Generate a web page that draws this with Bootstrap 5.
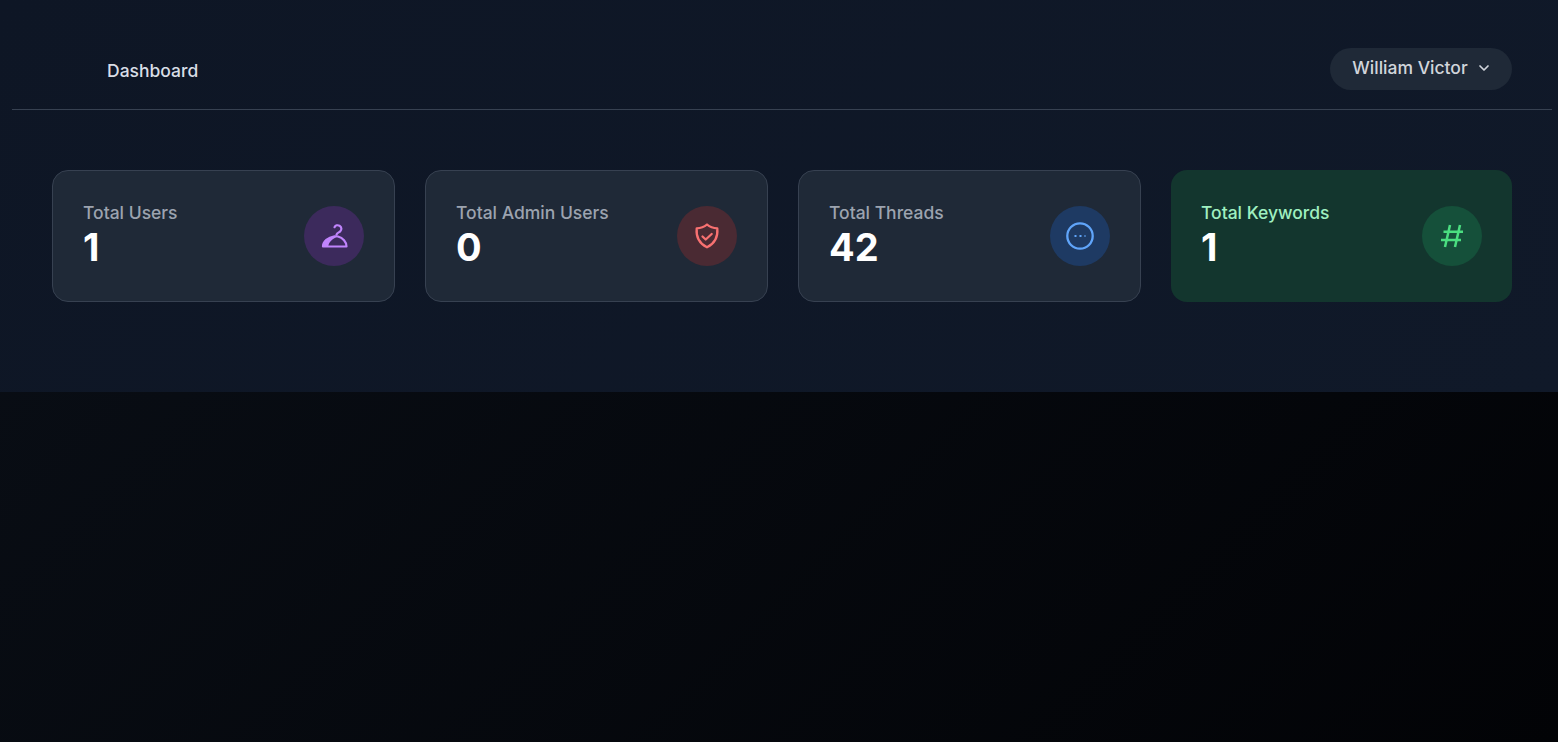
<!DOCTYPE html>
<html lang="en">
<head>
<meta charset="utf-8">
<title>Dashboard</title>
<link href="https://cdn.jsdelivr.net/npm/bootstrap@5.3.0/dist/css/bootstrap.min.css" rel="stylesheet">
<style>
html,body{height:100%}
body{font-family:Inter,"Liberation Sans",sans-serif;background:linear-gradient(135deg,#0a0f17 0%,#020306 100%);min-height:742px;overflow:hidden}
.upper-area{height:392px;background:linear-gradient(135deg,#0e1625 0%,#101929 100%)}
.top-strip{height:110px;margin:0 6px 0 12px;padding:48px 40px 0 95px;border-bottom:1px solid #374151}
.page-title{color:#d9dee6;font-size:17.5px;font-weight:500;line-height:24px;margin-top:11px}
.user-pill{height:42px;width:182px;border:0;border-radius:21px;background:#1f2937;color:#d1d5db;font-size:17.5px;font-weight:500;gap:10px;padding:0 0 2px}
.stat-row{padding:60px 46px 0 52px;gap:30px}
.stat-box{flex:1 1 0;height:132px;border-radius:16px;background:#1f2937;border:1px solid #374151;padding:0 30px}
.stat-box.is-green{background:#13362e;border:0}
.stat-label{color:#9ca3af;font-size:17.5px;font-weight:500;line-height:24px}
.is-green .stat-label{color:#9ff0c0}
.stat-num{color:#fff;font-size:38px;font-weight:700;line-height:46px;margin-top:-1px}
.stat-text{margin-top:-1px}
.icon-disc{width:60px;height:60px;border-radius:50%;flex:none}
.disc-purple{background:#3c2a5c;color:#c084fc}
.disc-red{background:#4a2a33;color:#f87171}
.disc-blue{background:#1e3a63;color:#60a5fa}
.disc-green{background:#15503a;color:#4ade80}
</style>
</head>
<body>
<div class="upper-area">
  <div class="top-strip d-flex justify-content-between align-items-start">
    <div class="page-title">Dashboard</div>
    <button type="button" class="user-pill d-flex align-items-center justify-content-center">William Victor
      <svg width="12" height="12" viewBox="0 0 12 12" fill="none" stroke="currentColor" stroke-width="1.7" stroke-linecap="round" stroke-linejoin="round"><path d="M2 4l4 4 4-4"/></svg>
    </button>
  </div>
  <div class="stat-row d-flex">
    <div class="stat-box d-flex align-items-center justify-content-between">
      <div class="stat-text"><div class="stat-label">Total Users</div><div class="stat-num">1</div></div>
      <div class="icon-disc disc-purple d-flex align-items-center justify-content-center">
        <svg width="32" height="32" viewBox="0 0 32 32"><g fill="none" stroke="currentColor" stroke-width="2.200" stroke-linecap="round" stroke-linejoin="round"><path d="M16.500 7.200c1-1.900 3.200-2.400 5-1.500 2.200 1.200 2.500 4 .7 5.700-1.300 1.200-3 1.400-3.700 3.300"/><path d="M5 26.500h23.500c0-4.600-3.700-8.800-8.500-10-1-.2-2.500-.3-3.500-.2C10 17.400 5 21.500 5 26.500z"/></g><path fill="currentColor" d="M5 26.500c0-5 5-9.200 11.500-10.200 1.200-.2 2.400-.1 3.500.2-5.300 2-9 5-9.800 10z"/></svg>
      </div>
    </div>
    <div class="stat-box d-flex align-items-center justify-content-between">
      <div class="stat-text"><div class="stat-label">Total Admin Users</div><div class="stat-num">0</div></div>
      <div class="icon-disc disc-red d-flex align-items-center justify-content-center">
        <svg width="32" height="32" viewBox="0 0 32 32" fill="none" stroke="currentColor" stroke-width="2.300" stroke-linecap="round" stroke-linejoin="round"><path d="M16 4.500c2.800 2.400 6.200 3.700 10.300 3.900.8 8.400-2.500 15-10.300 18.900C8.200 23.400 4.900 16.800 5.700 8.400 9.800 8.200 13.200 6.900 16 4.500z"/><path d="M11.500 16.500l3.200 3 6-5.500"/></svg>
      </div>
    </div>
    <div class="stat-box d-flex align-items-center justify-content-between">
      <div class="stat-text"><div class="stat-label">Total Threads</div><div class="stat-num">42</div></div>
      <div class="icon-disc disc-blue d-flex align-items-center justify-content-center">
        <svg width="32" height="32" viewBox="0 0 32 32" fill="none" stroke="currentColor" stroke-width="2.300"><circle cx="16" cy="16" r="12.700"/><path stroke-width="2" stroke-dasharray="2 3" d="M10.500 16h11"/></svg>
      </div>
    </div>
    <div class="stat-box is-green d-flex align-items-center justify-content-between">
      <div class="stat-text"><div class="stat-label">Total Keywords</div><div class="stat-num">1</div></div>
      <div class="icon-disc disc-green d-flex align-items-center justify-content-center">
        <svg width="24" height="24" viewBox="0 0 24 24" fill="none" stroke="currentColor" stroke-width="2.500"><path d="M10 1 5 23M20 1 15 23M3.500 7.700H23M1 16h20"/></svg>
      </div>
    </div>
  </div>
</div>
<script src="https://cdn.jsdelivr.net/npm/bootstrap@5.3.0/dist/js/bootstrap.bundle.min.js"></script>
</body>
</html>
